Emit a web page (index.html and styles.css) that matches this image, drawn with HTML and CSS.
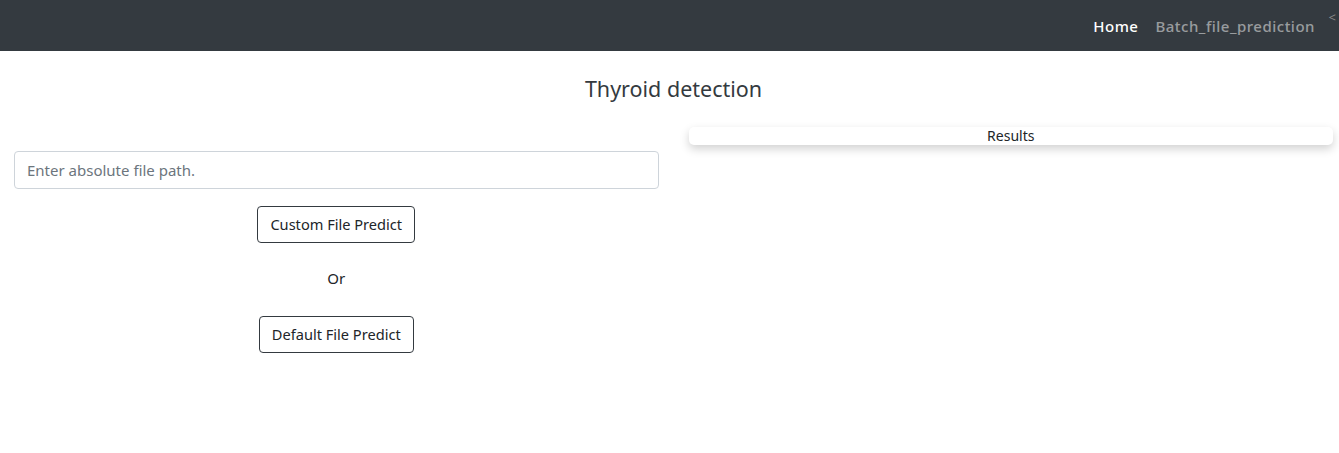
FILE: index.html
```html
<!DOCTYPE html>
<html>
<head>
<meta charset="utf-8">
<link rel="stylesheet" href="styles.css">
</head>
<body>
<nav class="navbar">
  <ul class="nav">
    <li><a class="nav-link active" href="#">Home</a></li>
    <li><a class="nav-link" href="#">Batch_file_prediction</a></li>
  </ul>
  <span class="edge">&lt;</span>
</nav>
<h4 class="title">Thyroid detection</h4>
<div class="row">
  <div class="col left">
    <input class="form-control" type="text" placeholder="Enter absolute file path.">
    <button class="btn">Custom File Predict</button>
    <p class="or">Or</p>
    <button class="btn">Default File Predict</button>
  </div>
  <div class="col right">
    <div class="card">Results</div>
  </div>
</div>
</body>
</html>
```
FILE: styles.css
```css
* { box-sizing: border-box; }
body {
  margin: 0;
  font-family: "Noto Sans", "Open Sans", sans-serif;
  color: #212529;
  background: #fff;
}
.navbar {
  background: #343a40;
  height: 51px;
  display: flex;
  justify-content: flex-end;
  align-items: center;
  position: relative;
  padding-right: 24px;
}
.nav {
  list-style: none;
  margin: 0;
  padding: 0;
  display: flex;
  gap: 17px;
}
.nav-link {
  text-decoration: none;
  font-size: 15px;
  font-weight: 500;
  color: rgba(255,255,255,.5);
  letter-spacing: 0.5px;
}
.nav-link.active { color: #fff; }
.edge {
  position: absolute;
  right: 3px;
  top: 8px;
  color: #888;
  font-size: 13px;
}
.title {
  margin: 24px 0 0;
  padding-left: 8px;
  text-align: center;
  font-weight: 400;
  font-size: 21.5px;
  line-height: 28px;
  color: #343a40;
}
.row {
  display: flex;
  gap: 30px;
  padding: 0 6px 0 14px;
  margin-top: 24px;
}
.col { flex: 1; }
.left {
  display: flex;
  flex-direction: column;
  align-items: center;
  padding-top: 24px;
}
.form-control {
  width: 100%;
  height: 38px;
  border: 1px solid #ced4da;
  border-radius: 4px;
  padding: 6px 12px;
  font-family: inherit;
  font-size: 15px;
  color: #495057;
}
.form-control::placeholder { color: #6c757d; }
.btn {
  margin-top: 17px;
  height: 37px;
  padding: 0 12px 2px;
  background: #fff;
  border: 1px solid #343a40;
  border-radius: 4px;
  font-family: inherit;
  font-size: 14.6px;
  color: #212529;
}
.or {
  margin: 25px 0 0;
  font-size: 15px;
  line-height: 20px;
}
.or + .btn { margin-top: 28px; }
.card {
  background: #fff;
  border-radius: 5px;
  height: 18px;
  text-align: center;
  font-size: 14px;
  line-height: 18px;
  box-shadow: 0 4px 10px rgba(0,0,0,.18);
}
```
